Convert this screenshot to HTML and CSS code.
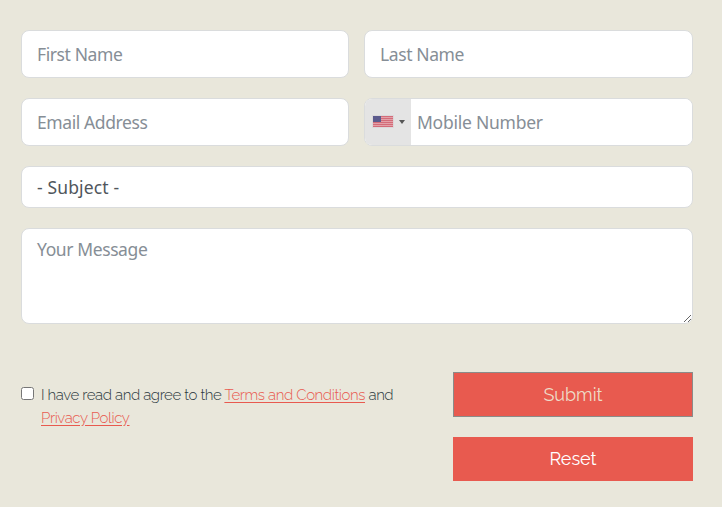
FILE: index.html
```html
<!DOCTYPE html>
<html lang="en">
<head>
    <meta charset="UTF-8">
    <meta name="viewport" content="width=device-width, initial-scale=1.0">
    <title>Contact Form</title>
    <link rel="stylesheet" href="styles.css">
</head>
<body>
    <form class="contact-form">
        <div class="row">
            <input type="text" class="form-control first-name" placeholder="First Name">
            <input type="text" class="form-control last-name" placeholder="Last Name">
        </div>
        <div class="row">
            <input type="email" class="form-control email" placeholder="Email Address">
            <div class="phone form-control">
                <div class="country">
                    <svg class="flag" width="22" height="13" viewBox="0 0 22 13">
                        <rect width="22" height="13" fill="#dcd9db"/>
                        <rect x="1" y="1" width="20" height="11" fill="#e3a0a8"/>
                        <path d="M1 1.5h20M1 3.5h20M1 5.5h20M1 7.5h20M1 9.5h20M1 11.5h20" stroke="#d36c79"/>
                        <rect x="1" y="1" width="8" height="6" fill="#5b5b8d"/>
                    </svg>
                    <span class="arrow"></span>
                </div>
                <input type="tel" class="mobile" placeholder="Mobile Number">
            </div>
        </div>
        <select class="form-control subject">
            <option>- Subject -</option>
        </select>
        <textarea class="form-control message" placeholder="Your Message"></textarea>

        <div class="bottom">
            <div class="agree">
                <input type="checkbox" id="agree">
                <label for="agree"><span class="line">I have read and agree to the <a href="#">Terms and Conditions</a> and</span> <span class="line"><a href="#">Privacy Policy</a></span></label>
            </div>
            <div class="buttons">
                <button type="submit" class="btn btn-submit" disabled>Submit</button>
                <button type="reset" class="btn btn-reset">Reset</button>
            </div>
        </div>
    </form>
</body>
</html>
```
FILE: styles.css
```css
* {
    margin: 0;
    padding: 0;
    box-sizing: border-box;
}
body {
    background: #e9e7db;
    font-family: Raleway, Lato, sans-serif;
    color: #2c3840;
}
.contact-form {
    width: 672px;
    margin: 30px 0 0 21px;
}
.row {
    display: grid;
    grid-template-columns: 328px 329px;
    gap: 15px;
    margin-bottom: 20px;
}
.form-control {
    display: block;
    width: 100%;
    height: 48px;
    padding: 0 15px;
    border: 1px solid #dadcdd;
    border-radius: 8px;
    background: #fff;
    font-family: "Segoe UI", "Noto Sans", sans-serif;
    font-size: 17.5px;
    letter-spacing: -0.4px;
    color: #50565c;
    outline: none;
}
::placeholder {
    color: #868e96;
    opacity: 1;
}

/* Phone field with country picker */
.phone {
    display: flex;
    padding: 0;
    overflow: hidden;
}
.country {
    display: flex;
    align-items: center;
    width: 46px;
    padding-left: 7px;
    background: #e4e4e4;
}
.flag {
    margin-bottom: 1px;
}
.arrow {
    margin-left: 5px;
    border-left: 3px solid transparent;
    border-right: 3px solid transparent;
    border-top: 4px solid #555;
}
.mobile {
    flex: 1;
    min-width: 0;
    padding-left: 6px;
    border: none;
    font: inherit;
    letter-spacing: -0.25px;
    outline: none;
}
.subject {
    height: 42px;
    letter-spacing: 0.15px;
    appearance: none;
}
.message {
    height: 96px;
    margin-top: 20px;
    padding-top: 8px;
    resize: vertical;
}

.bottom {
    display: flex;
    justify-content: space-between;
    margin-top: 48px;
}
.agree {
    display: flex;
    padding-top: 12px;
    font-size: 15px;
    font-weight: 300;
    letter-spacing: -0.4px;
    line-height: 23px;
}
.agree input {
    width: 13px;
    height: 13px;
    margin: 3px 7px 0 0;
}
.line {
    display: block;
    white-space: nowrap;
}
a {
    color: #e85a4f;
    text-underline-offset: 2px;
}
.buttons {
    width: 240px;
}
.btn {
    display: block;
    width: 100%;
    height: 44px;
    border: none;
    background: #e85a4f;
    font-family: inherit;
    font-size: 18px;
    color: #fff;
}
.btn-submit {
    height: 45px;
    margin-bottom: 20px;
    border: 1px solid #8b8b89;
    color: #eedcc8;
}
.btn-reset {
    padding-bottom: 2px;
}
```
